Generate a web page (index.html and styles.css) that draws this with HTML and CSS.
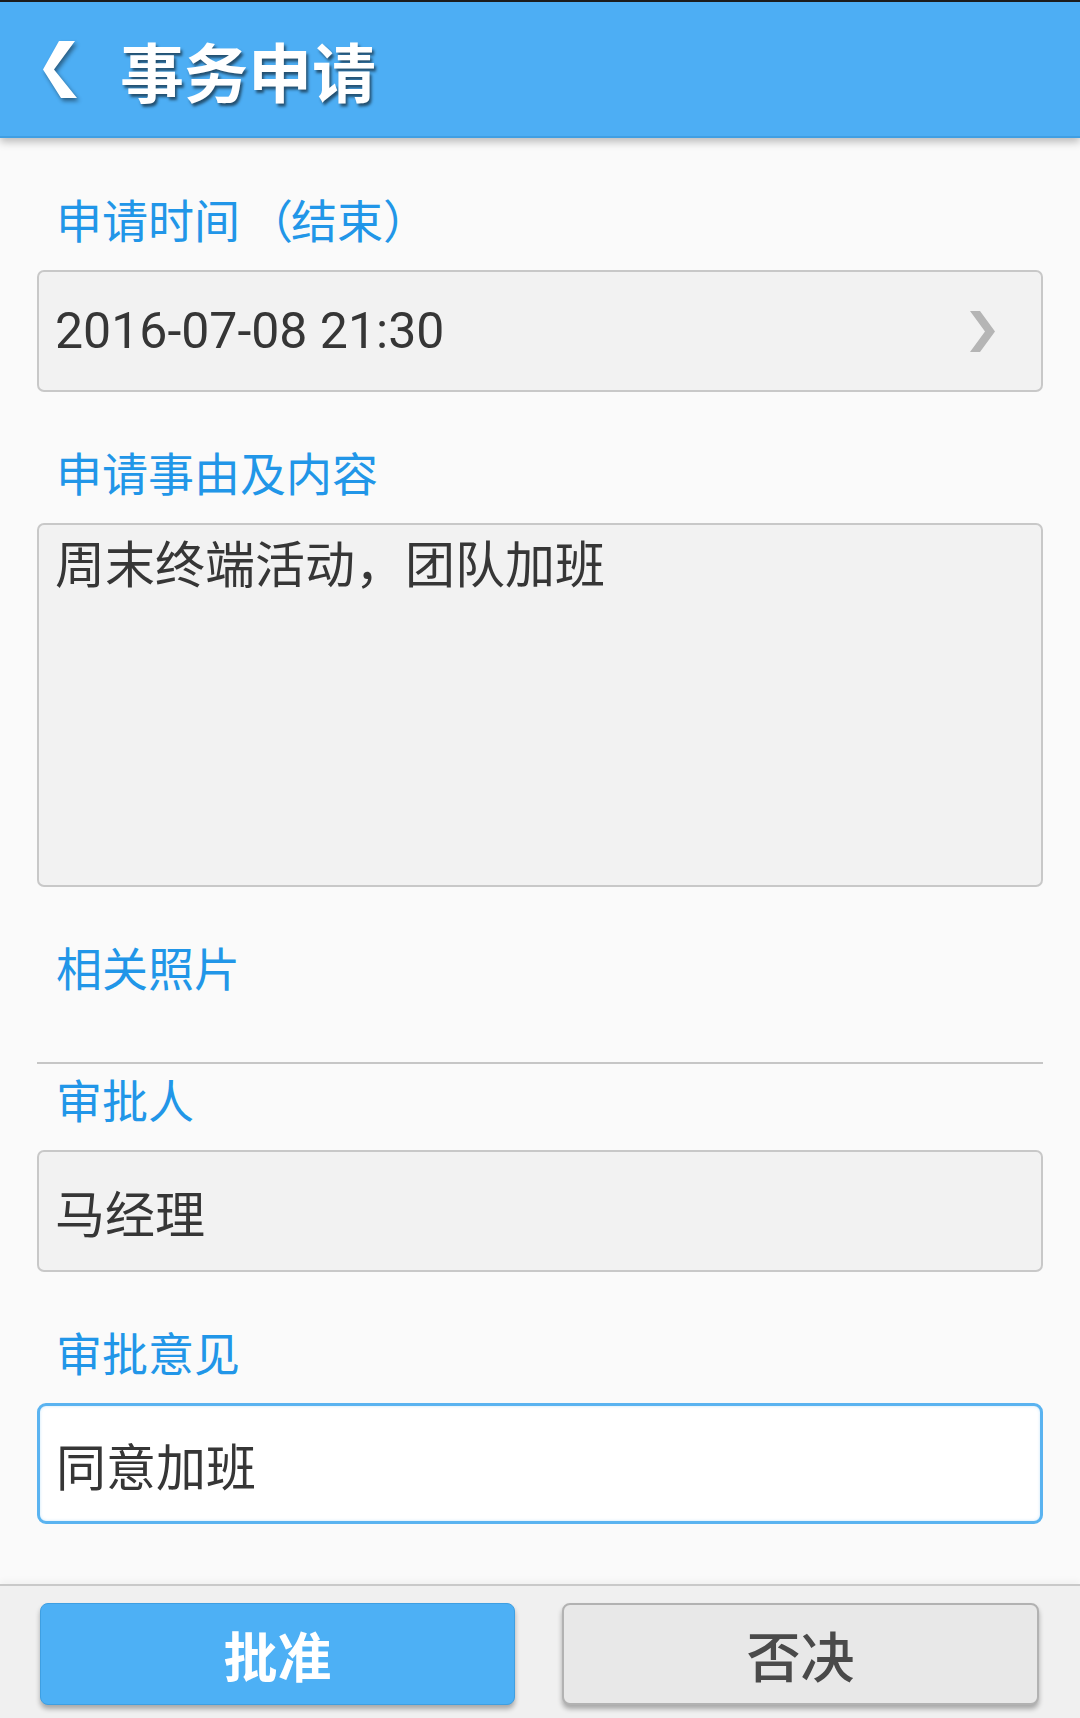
FILE: index.html
```html
<!DOCTYPE html>
<html lang="zh-CN">
<head>
    <meta charset="UTF-8">
    <meta name="viewport" content="width=device-width, initial-scale=1.0">
    <title>事务申请</title>
    <link rel="stylesheet" href="styles.css">
</head>
<body>
    <div id="page">
        <div class="header">
            <svg class="back" width="34" height="57" viewBox="0 0 34 57">
                <polygon points="16,0 32,0 11,28.5 34,57 18,57 0,28.5" fill="#ffffff"/>
            </svg>
            <h1>事务申请</h1>
        </div>

        <div class="main">
            <div class="label first">申请时间<span class="open">（</span>结束）</div>
            <div class="box select">
                <span class="date">2016-07-08 21:30</span>
                <svg class="arrow" width="25" height="41" viewBox="0 0 25 41">
                    <polygon points="0,0 10,0 25,20.5 10,41 0,41 15,20.5" fill="#b5b5b5"/>
                </svg>
            </div>

            <div class="label">申请事由及内容</div>
            <div class="box textarea">周末终端活动，团队加班</div>

            <div class="label">相关照片</div>
            <div class="photos"></div>

            <div class="label tight">审批人</div>
            <div class="box">马经理</div>

            <div class="label">审批意见</div>
            <div class="box active">同意加班</div>
        </div>

        <div class="footer">
            <button class="btn ok">批准</button>
            <button class="btn no">否决</button>
        </div>
    </div>
</body>
</html>
```

FILE: styles.css
```css
body {
    margin: 0px;
    font-family: 'Noto Sans CJK SC', sans-serif;
    background-color: #fafafa;
}
#page {
    height: 1718px;
    display: flex;
    flex-direction: column;
}
.header {
    height: 138px;
    flex-shrink: 0;
    box-sizing: border-box;
    border-top: 2px solid #1c1c1c;
    background-color: #4daef4;
    border-bottom: 2px solid #409fe3;
    box-shadow: 0 4px 8px rgba(0, 0, 0, 0.25);
    display: flex;
    align-items: center;
    padding-left: 43px;
    position: relative;
    z-index: 1;
}
.back {
    filter: drop-shadow(2px 3px 2px rgba(0, 0, 0, 0.45));
}
h1 {
    margin: 0px 0px 0px 43px;
    color: white;
    font-size: 64px;
    font-weight: bold;
    line-height: 80px;
    text-shadow: 2px 3px 3px rgba(0, 0, 0, 0.55);
}
.main {
    flex: 1;
    padding: 50px 37px 0px 37px;
}
.label {
    color: #2196e8;
    font-size: 46px;
    line-height: 60px;
    height: 60px;
    padding-left: 19px;
    margin-top: 49px;
    margin-bottom: 22px;
}
.label.first {
    margin-top: 0px;
}
.label.tight {
    margin-top: 4px;
}
.open {
    margin-left: 7px;
    margin-right: -2px;
}
.box {
    box-sizing: border-box;
    height: 122px;
    background-color: #f2f2f2;
    border: 2px solid #c8c8c8;
    border-radius: 7px;
    padding: 0px 16px;
    color: #363636;
    font-size: 50px;
    display: flex;
    align-items: center;
}
.select {
    justify-content: space-between;
    padding-right: 46px;
}
.date {
    font-family: Roboto, 'Noto Sans CJK SC', sans-serif;
    font-size: 50px;
}
.textarea {
    height: 364px;
    align-items: flex-start;
    line-height: 60px;
    padding-top: 6px;
}
.photos {
    height: 66px;
    border-bottom: 2px solid #c6c6c6;
    margin-top: -22px;
}
.active {
    height: 121px;
    background-color: #ffffff;
    border: 3px solid #5ab3f0;
    border-radius: 9px;
    box-shadow: inset 0 0 3px rgba(90, 179, 240, 0.35);
}
.footer {
    height: 134px;
    flex-shrink: 0;
    box-sizing: border-box;
    border-top: 2px solid #c9c9c9;
    background-color: #f0f0f0;
    box-shadow: 0 -4px 6px rgba(0, 0, 0, 0.03);
    display: flex;
    gap: 47px;
    padding: 17px 41px 0px 40px;
}
.btn {
    flex: 1;
    height: 102px;
    border-radius: 8px;
    font-family: 'Noto Sans CJK SC', sans-serif;
    font-size: 54px;
    cursor: pointer;
    box-shadow: 0 4px 5px rgba(0, 0, 0, 0.3);
}
.ok {
    background-color: #4db0f5;
    border: 1px solid #3e9fe2;
    color: white;
    font-weight: bold;
}
.no {
    background-color: #e8e8e8;
    border: 2px solid #b2b2b2;
    color: #4a4a4a;
    font-weight: 500;
}
```
